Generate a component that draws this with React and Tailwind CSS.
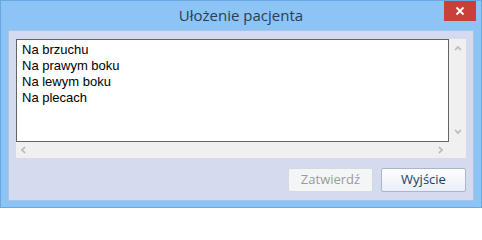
import React from "react";

const Chevron = ({ dir }) => {
  const paths = {
    up: "M1 5 L4 2 L7 5",
    down: "M1 2 L4 5 L7 2",
    left: "M5 1 L2 4 L5 7",
    right: "M2 1 L5 4 L2 7",
  };
  return (
    <svg width="8" height="8" viewBox="0 0 8 8" className="block">
      <path d={paths[dir]} fill="none" stroke="#b6b8bf" strokeWidth="1.7" />
    </svg>
  );
};

export default function App() {
  const items = ["Na brzuchu", "Na prawym boku", "Na lewym boku", "Na plecach"];
  return (
    <div
      className="w-[482px] h-[208px] bg-[#8cc4f6] border border-[#6aa8e2] flex flex-col relative overflow-hidden"
      style={{ fontFamily: '"Liberation Sans", Arial, sans-serif' }}
    >
      <div className="h-[29px] shrink-0 flex items-center justify-center">
        <span
          className="text-[15px] text-[#2a3d56] leading-none"
          style={{ fontFamily: '"Open Sans", "Noto Sans", sans-serif' }}
        >
          Ułożenie pacjenta
        </span>
      </div>
      <div className="absolute top-0 right-[5px] w-[32px] h-[20px] bg-[#c9403a] flex items-center justify-center">
        <svg width="10" height="10" viewBox="0 0 10 10">
          <path d="M1.5 1.5 L8.5 8.5 M8.5 1.5 L1.5 8.5" stroke="#ffffff" strokeWidth="1.8" />
        </svg>
      </div>
      <div className="mx-[7px] h-[171px] shrink-0 bg-[#d4dbef] border border-[#a8c4e8] pt-[8px] px-[7px] flex flex-col">
        <div className="grid grid-cols-[433px_17px] grid-rows-[103px_16px]">
          <div className="bg-white border border-[#646464] pl-[5px] pt-[2px] text-[13px] text-black leading-[16px]">
            {items.map((t) => (
              <div key={t}>{t}</div>
            ))}
          </div>
          <div className="bg-[#f0f0f0] flex flex-col items-center justify-between py-[6px]">
            <Chevron dir="up" />
            <Chevron dir="down" />
          </div>
          <div className="bg-[#f0f0f0] flex items-center justify-between px-[4px]">
            <Chevron dir="left" />
            <Chevron dir="right" />
          </div>
          <div className="bg-[#f0f0f0]" />
        </div>
        <div className="flex justify-end gap-[8px] mt-[10px]">
          <div
            className="w-[85px] h-[24px] border border-[#d5d9e0] bg-[#f4f5f7] rounded-[2px] flex items-center justify-center text-[13px] text-[#9a9a9a]"
            style={{ fontFamily: '"Open Sans", "Noto Sans", sans-serif' }}
          >
            Zatwierdź
          </div>
          <div
            className="w-[85px] h-[24px] border border-[#a9b7cd] bg-gradient-to-b from-[#ffffff] to-[#e9eef7] rounded-[2px] flex items-center justify-center text-[13px] text-[#1f3b63]"
            style={{ fontFamily: '"Open Sans", "Noto Sans", sans-serif' }}
          >
            Wyjście
          </div>
        </div>
      </div>
    </div>
  );
}
